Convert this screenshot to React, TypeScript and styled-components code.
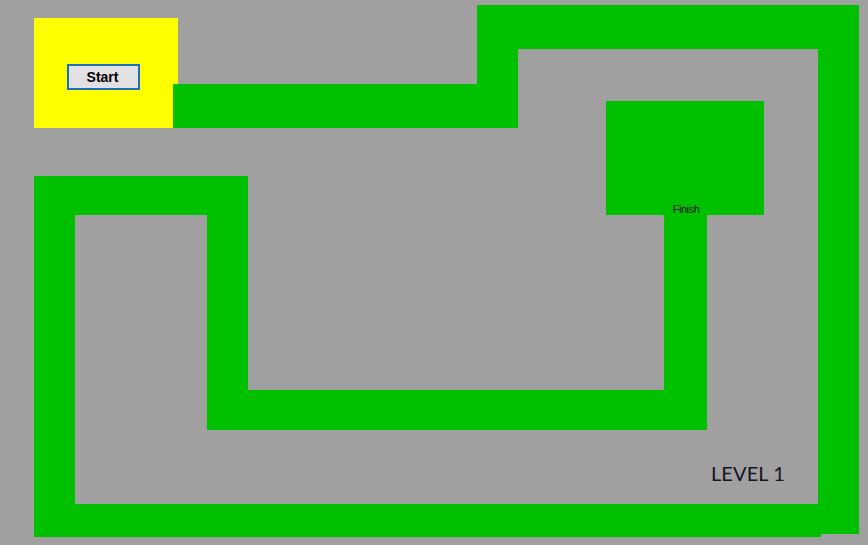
import React from "react";
import styled, { createGlobalStyle } from "styled-components";

const GlobalStyle = createGlobalStyle`
  html, body { margin: 0; padding: 0; background: #a0a0a0; }
  body { font-family: "Liberation Sans", Arial, sans-serif; }
`;

const Board = styled.div`
  position: relative;
  width: 868px;
  height: 545px;
  background: #a0a0a0;
  overflow: hidden;
`;

type Rect = { $x: number; $y: number; $w: number; $h: number };

const Track = styled.div<Rect>`
  position: absolute;
  left: ${(p) => p.$x}px;
  top: ${(p) => p.$y}px;
  width: ${(p) => p.$w}px;
  height: ${(p) => p.$h}px;
  background: #00c000;
`;

const StartZone = styled.div`
  position: absolute;
  left: 34px;
  top: 18px;
  width: 144px;
  height: 110px;
  box-sizing: border-box;
  padding: 46px 0 0 33px;
  background: #ffff00;
  display: flex;
  align-items: flex-start;
`;

const StartButton = styled.button`
  width: 73px;
  height: 26px;
  box-sizing: border-box;
  margin: 0;
  padding: 0 2px 0 0;
  border: 2px solid #1c6fbd;
  background: #e1e1e1;
  color: #000;
  font-family: "Liberation Sans", Arial, sans-serif;
  font-weight: bold;
  font-size: 14px;
  line-height: 20px;
  cursor: pointer;
`;

const FinishZone = styled.div`
  position: absolute;
  left: 606px;
  top: 101px;
  width: 158px;
  height: 114px;
  background: #00c000;
  display: flex;
  flex-direction: column;
  justify-content: flex-end;
  align-items: center;
`;

const FinishLabel = styled.span`
  font-family: "Liberation Sans", Arial, sans-serif;
  font-size: 11px;
  letter-spacing: -0.45px;
  line-height: 13px;
  color: #111;
  margin-bottom: -1px;
  margin-left: 2px;
`;

const LevelLabel = styled.div`
  position: absolute;
  left: 711px;
  top: 461px;
  font-family: Lato, "Open Sans", sans-serif;
  font-size: 20px;
  line-height: 24px;
  color: #14141f;
  letter-spacing: 0.1px;
`;

const tracks: Rect[] = [
  { $x: 477, $y: 5, $w: 382, $h: 44 },
  { $x: 818, $y: 5, $w: 41, $h: 529 },
  { $x: 477, $y: 5, $w: 41, $h: 123 },
  { $x: 173, $y: 84, $w: 345, $h: 44 },
  { $x: 34, $y: 504, $w: 787, $h: 33 },
  { $x: 34, $y: 176, $w: 41, $h: 361 },
  { $x: 34, $y: 176, $w: 214, $h: 39 },
  { $x: 207, $y: 176, $w: 41, $h: 254 },
  { $x: 207, $y: 390, $w: 500, $h: 40 },
  { $x: 664, $y: 210, $w: 43, $h: 220 },
];

export default function App() {
  return (
    <>
      <GlobalStyle />
      <Board>
        <StartZone>
          <StartButton>Start</StartButton>
        </StartZone>
        {tracks.map((t, i) => (
          <Track key={i} {...t} />
        ))}
        <FinishZone>
          <FinishLabel>Finish</FinishLabel>
        </FinishZone>
        <LevelLabel>LEVEL 1</LevelLabel>
      </Board>
    </>
  );
}
